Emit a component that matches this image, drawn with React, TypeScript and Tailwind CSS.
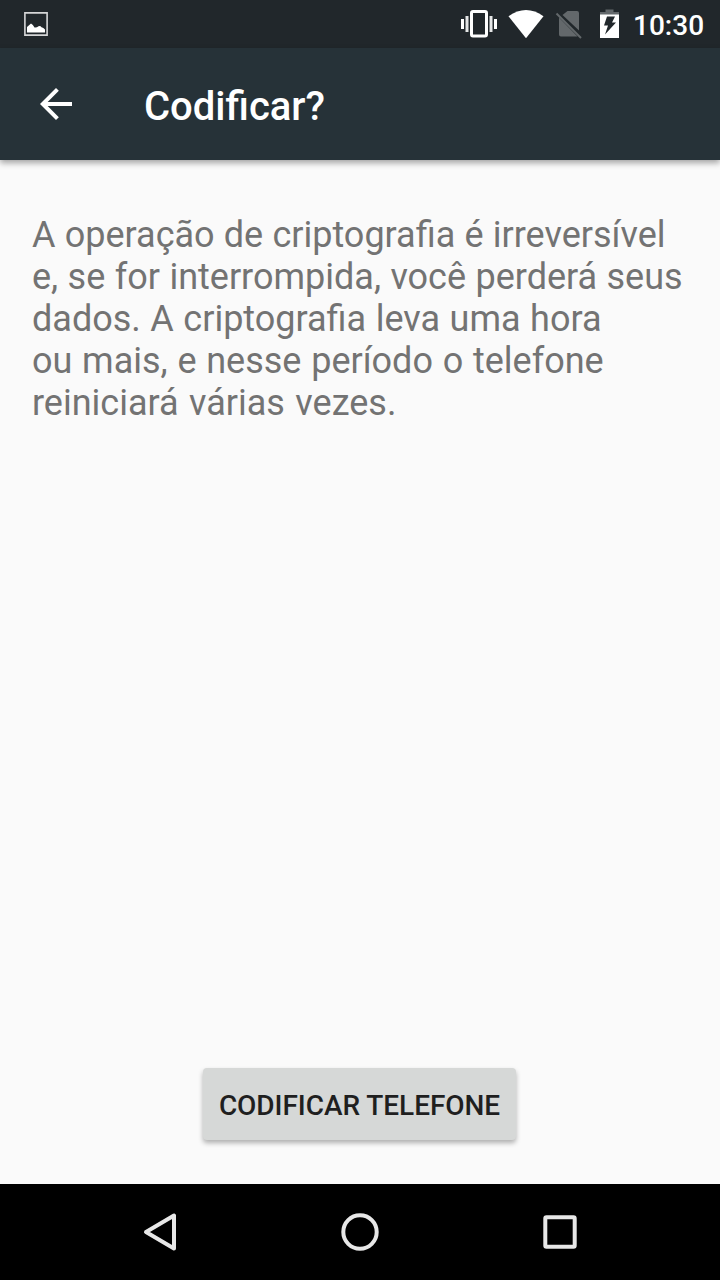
const StatusBar = () => {
    return (
        <div className="flex h-12 items-center bg-[#21272b] text-white">
            {/* notification icon */}
            <svg className="ml-6" width="24" height="24" viewBox="0 0 24 24">
                <path d="M.900 .900h22.200v22.200H.900z" fill="none" stroke="#d5d6d7" strokeWidth="1.600" />
                <path d="M3 20.500v-5.500l4-3.500q2 1 3.500 4 2 .500 4-1.300 2-.500 3 1 2 .300 3.500 2.300v3z" fill="#fff" />
            </svg>

            {/* system icons */}
            <div className="ml-auto flex h-12 items-center">
                <svg width="260" height="48" viewBox="460 0 260 48">
                    <rect x="471.500" y="11.500" width="15" height="24.500" rx="1.500" fill="none" stroke="#fff" strokeWidth="3" />
                    <path d="M461 19h3v10h-3zM494 19h3v10h-3z" fill="#fff" />
                    <path d="M465.500 16h3v16h-3zM489.500 16h3v16h-3z" fill="#e4e5e6" />
                    <path d="M508.500 16.300Q526 3.700 543.500 16.300L526 38.300z" fill="#fff" />
                    <path d="M567.500 11H577q2 0 2 2v17.500L562.500 15zM559 17.500L577.500 36.500H561q-2 0-2-2z" fill="#63686b" />
                    <path d="M556.500 13.500L581 38" stroke="#63686b" strokeWidth="2" />
                    <path d="M605.500 9.500h8v2.500h5.500v3h-19v-3h5.500z" fill="#63686b" />
                    <path d="M600 14.500h19V38h-19z" fill="#fff" />
                    <path d="M607 16.500h8l-3 6h4l-11 12 3-9h-4z" fill="#21272b" />
                    <text x="633" y="35" fontSize="28" fontWeight="500" fontFamily="Roboto, sans-serif" fill="#fff">10:30</text>
                </svg>
            </div>
        </div>
    )
}

const App = () => {
    return (
        <div className="flex h-[1280px] w-[720px] flex-col bg-[#fafafa] font-[Roboto,sans-serif]">
            <StatusBar />

            {/* toolbar */}
            <header className="z-10 flex h-28 items-center bg-[#263238] text-white shadow-[0_3px_6px_rgba(0,0,0,0.35)]">
                <svg className="ml-8" width="48" height="48" viewBox="0 0 24 24" fill="currentColor">
                    <path d="M20 11H7.830l5.590-5.590L12 4l-8 8 8 8 1.410-1.410L7.830 13H20v-2z" />
                </svg>
                <h1 className="ml-16 pt-1.5 text-[40px] font-medium">Codificar?</h1>
            </header>

            {/* message */}
            <main className="flex flex-1 flex-col items-center">
                <p className="w-full px-8 pt-[54px] text-4xl leading-[42px] text-[#737373]">
                    <span className="[word-spacing:0.3px]">A operação de criptografia é irreversível</span><br />
                    <span className="[word-spacing:0.5px]">e, se for interrompida, você perderá seus</span><br />
                    <span className="[word-spacing:0.6px]">dados. A criptografia leva uma hora</span><br />
                    <span className="[word-spacing:0.8px]">ou mais, e nesse período o telefone</span><br />
                    <span className="[word-spacing:1.5px]">reiniciará várias vezes.</span>
                </p>
                <button className="mt-auto mr-px mb-11 h-[72px] w-[313px] rounded-[4px] bg-[#d6d8d7] pt-1 text-[28px] font-medium tracking-[-0.05px] text-[#1f1f1f] shadow-[0_3px_5px_rgba(0,0,0,0.3)]">
                    CODIFICAR TELEFONE
                </button>
            </main>

            {/* navigation bar */}
            <nav className="flex h-24 items-center justify-center gap-[152px] bg-black">
                <svg width="48" height="48" viewBox="0 0 48 48" fill="none" stroke="#e8e8e8" strokeWidth="4">
                    <path d="M38 7.500v33L10 24z" strokeLinejoin="round" />
                </svg>
                <svg width="48" height="48" viewBox="0 0 48 48" fill="none" stroke="#e8e8e8" strokeWidth="4">
                    <circle cx="24" cy="24" r="16.700" />
                </svg>
                <svg width="48" height="48" viewBox="0 0 48 48" fill="none" stroke="#e8e8e8" strokeWidth="4">
                    <rect x="9.300" y="9.300" width="29.400" height="29.400" rx="1.200" />
                </svg>
            </nav>
        </div>
    )
}

export default App
